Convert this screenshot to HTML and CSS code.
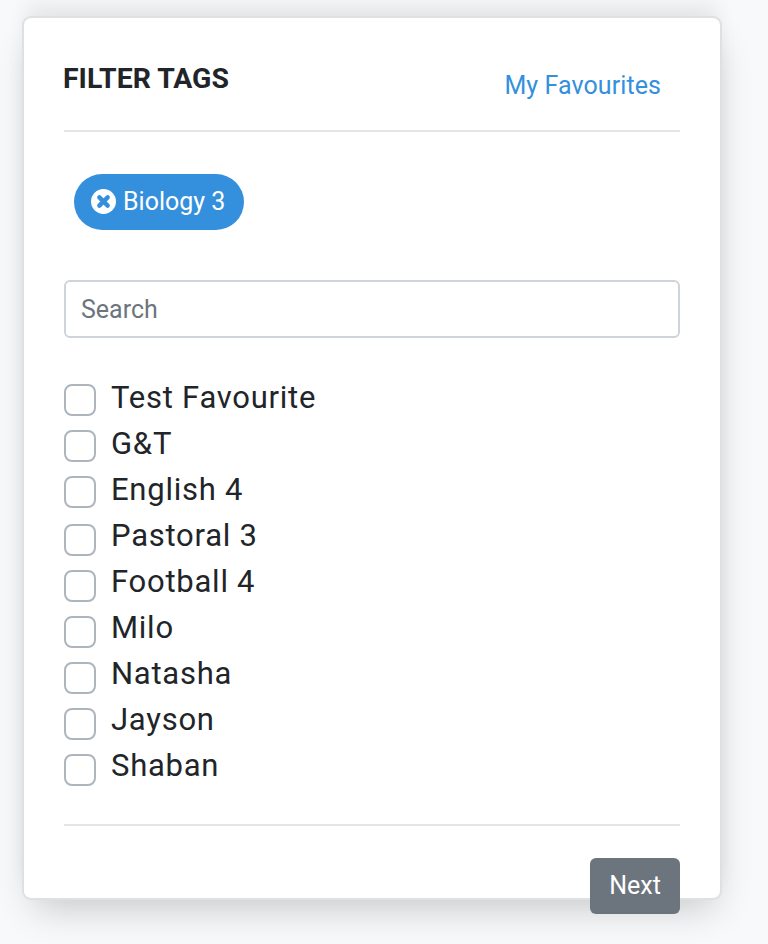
FILE: index.html
```html
<!DOCTYPE html>
<html lang="en">
<head>
<meta charset="utf-8">
<title>Filter Tags</title>
<link rel="stylesheet" href="styles.css">
</head>
<body>
<main class="card">
  <header class="card-head">
    <h1 class="title">FILTER TAGS</h1>
    <a class="fav-link" href="#">My Favourites</a>
  </header>
  <div class="chips">
    <span class="chip">
      <svg class="chip-icon" viewBox="0 0 24 24" aria-hidden="true">
        <circle cx="12" cy="12" r="12" fill="#fff"/>
        <path d="M8 8l8 8M16 8l-8 8" stroke="#3490dc" stroke-width="4.2" stroke-linecap="round" fill="none"/>
      </svg>
      Biology 3
    </span>
  </div>
  <input class="search" type="text" placeholder="Search">
  <ul class="tag-list">
    <li class="tag"><span class="box"></span>Test Favourite</li>
    <li class="tag"><span class="box"></span>G&amp;T</li>
    <li class="tag"><span class="box"></span>English 4</li>
    <li class="tag"><span class="box"></span>Pastoral 3</li>
    <li class="tag"><span class="box"></span>Football 4</li>
    <li class="tag"><span class="box"></span>Milo</li>
    <li class="tag"><span class="box"></span>Natasha</li>
    <li class="tag"><span class="box"></span>Jayson</li>
    <li class="tag"><span class="box"></span>Shaban</li>
  </ul>
  <footer class="card-foot">
    <button class="next" type="button">Next</button>
  </footer>
</main>
</body>
</html>
```
FILE: styles.css
```css
* { box-sizing: border-box; }
html, body { height: 100%; }
body {
  margin: 0;
  padding: 16px 46px 0 22px;
  background: #f8f9fa;
  font-family: Roboto, "Liberation Sans", sans-serif;
  color: #212529;
  overflow: hidden;
}
.card {
  height: 884px;
  background: #fff;
  border: 2px solid #dfe0e1;
  border-radius: 9px;
  box-shadow: 2px 18px 36px -10px rgba(0, 0, 0, .2), 0 -16px 20px -4px rgba(0, 0, 0, .07);
  padding: 0 40px;
}
.card-head {
  height: 114px;
  border-bottom: 2px solid #e4e5e6;
  display: flex;
  justify-content: space-between;
  align-items: flex-start;
}
.title {
  margin: 45px 0 0 -1px;
  font-size: 28.4px;
  line-height: 32px;
  font-weight: 700;
}
.fav-link {
  margin: 52px 19px 0 0;
  font-size: 25px;
  line-height: 32px;
  letter-spacing: .08px;
  color: #3490dc;
  text-decoration: none;
}
.chips { padding: 42px 0 0 10px; }
.chip {
  display: inline-flex;
  align-items: center;
  gap: 7px;
  height: 56px;
  padding: 0 19px 2px 17px;
  border-radius: 28px;
  background: #3490dc;
  color: #fff;
  font-size: 25px;
}
.chip-icon { width: 25px; height: 25px; }
.search {
  display: block;
  width: 100%;
  height: 58px;
  margin-top: 50px;
  padding: 1px 15px 0;
  border: 2px solid #ced4da;
  border-radius: 6px;
  font: 25px Roboto, sans-serif;
  color: #495057;
  outline: none;
}
.search::placeholder { color: #6c757d; opacity: 1; }
.tag-list { list-style: none; margin: 36px 0 0; padding: 0; }
.tag {
  display: flex;
  height: 46px;
  font-size: 31px;
  line-height: 48px;
  letter-spacing: .75px;
}
.box {
  width: 32px;
  height: 32px;
  margin: 10px 15px 0 0;
  border: 2px solid #adb5bd;
  border-radius: 8px;
  background: #fff;
}
.tag:nth-child(n+4) .box { margin-top: 12px; }
.card-foot {
  margin-top: 36px;
  border-top: 2px solid #e4e5e6;
  display: flex;
  justify-content: flex-end;
  padding-top: 32px;
}
.next {
  width: 90px;
  height: 56px;
  border: 0;
  border-radius: 6px;
  padding: 0 0 2px;
  background: #6c757d;
  color: #fff;
  font: 25px Roboto, sans-serif;
}
```
